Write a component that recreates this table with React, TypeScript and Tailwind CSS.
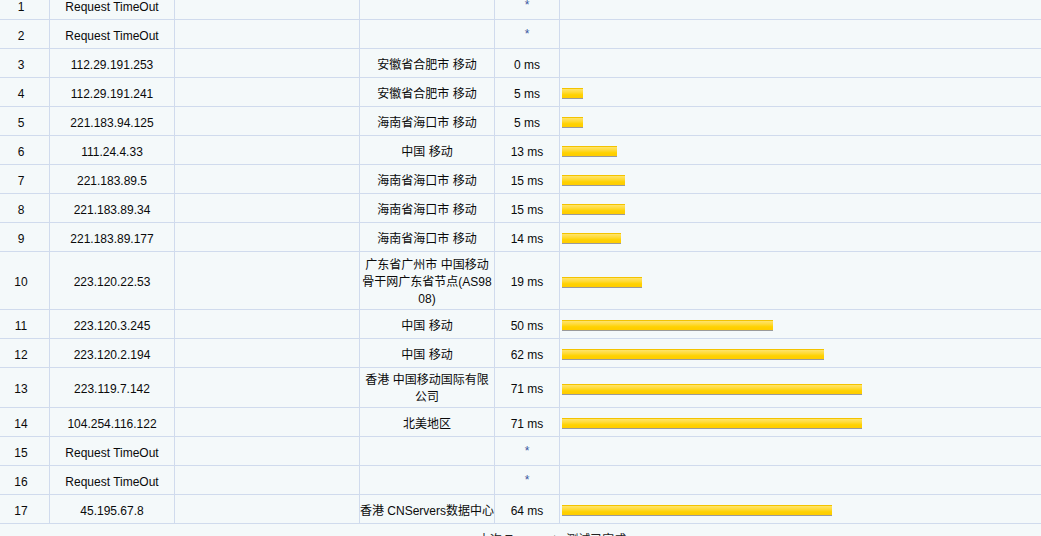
import React from "react";

type Hop = { n: number; ip: string; loc: string[]; ms: number | null; tight?: boolean };

const hops: Hop[] = [
  { n: 1, ip: "Request TimeOut", loc: [], ms: null },
  { n: 2, ip: "Request TimeOut", loc: [], ms: null },
  { n: 3, ip: "112.29.191.253", loc: ["安徽省合肥市 移动"], ms: 0 },
  { n: 4, ip: "112.29.191.241", loc: ["安徽省合肥市 移动"], ms: 5 },
  { n: 5, ip: "221.183.94.125", loc: ["海南省海口市 移动"], ms: 5 },
  { n: 6, ip: "111.24.4.33", loc: ["中国 移动"], ms: 13 },
  { n: 7, ip: "221.183.89.5", loc: ["海南省海口市 移动"], ms: 15 },
  { n: 8, ip: "221.183.89.34", loc: ["海南省海口市 移动"], ms: 15 },
  { n: 9, ip: "221.183.89.177", loc: ["海南省海口市 移动"], ms: 14 },
  { n: 10, ip: "223.120.22.53", loc: ["广东省广州市 中国移动", "骨干网广东省节点(AS98", "08)"], ms: 19 },
  { n: 11, ip: "223.120.3.245", loc: ["中国 移动"], ms: 50 },
  { n: 12, ip: "223.120.2.194", loc: ["中国 移动"], ms: 62 },
  { n: 13, ip: "223.119.7.142", loc: ["香港 中国移动国际有限", "公司"], ms: 71, tight: true },
  { n: 14, ip: "104.254.116.122", loc: ["北美地区"], ms: 71 },
  { n: 15, ip: "Request TimeOut", loc: [], ms: null },
  { n: 16, ip: "Request TimeOut", loc: [], ms: null },
  { n: 17, ip: "45.195.67.8", loc: ["香港 CNServers数据中心"], ms: 64 },
];

function Row({ h }: { h: Hop }) {
  const cell =
    "flex items-center justify-center border-r border-[#d0dbed] leading-[17px] " +
    (h.tight ? "pt-[4px] pb-[1px]" : "pt-[5px] pb-[1px]");
  return (
    <div className="grid grid-cols-[50px_125px_185px_135px_65px_1fr] min-h-[29px] border-b border-[#d0dbed]">
      <div className={cell + " pr-[7px]"}>{h.n}</div>
      <div className={cell}>{h.ip}</div>
      <div className={cell}></div>
      <div className={cell + " flex-col text-center whitespace-nowrap"}>
        {h.loc.map((l, i) => (
          <span key={i}>{l}</span>
        ))}
      </div>
      <div className={cell}>
        {h.ms === null ? (
          <span className="text-[#3a57a0] -translate-y-[2px]">*</span>
        ) : (
          <span>{h.ms} ms</span>
        )}
      </div>
      <div className="flex items-center pl-[2px]">
        {h.ms !== null && h.ms > 0 && (
          <div
            className="mt-[3px] h-[11px] border-t border-b border-t-[#f3c300] border-b-[#9a9a9a] bg-[linear-gradient(to_bottom,#ffe46a_0%,#ffdb3a_35%,#ffd200_65%,#ffcc00_100%)]"
            style={{ width: Math.round(h.ms * 4.22) }}
          />
        )}
      </div>
    </div>
  );
}

export default function App() {
  return (
    <div
      className="w-[1041px] h-[536px] overflow-hidden bg-[#f4f9fa] text-[12px] text-[#0a0a0a]"
      style={{ fontFamily: '"Liberation Sans", "Noto Sans CJK SC", sans-serif' }}
    >
      <div className="-mt-[10px] border-t border-[#d0dbed]">
        {hops.map((h) => (
          <Row key={h.n} h={h} />
        ))}
      </div>
      <div className="pt-[8px] pl-[478px] leading-[17px] text-[#222]">
        <span>本次 Traceroute 测试已完成</span>
      </div>
    </div>
  );
}
